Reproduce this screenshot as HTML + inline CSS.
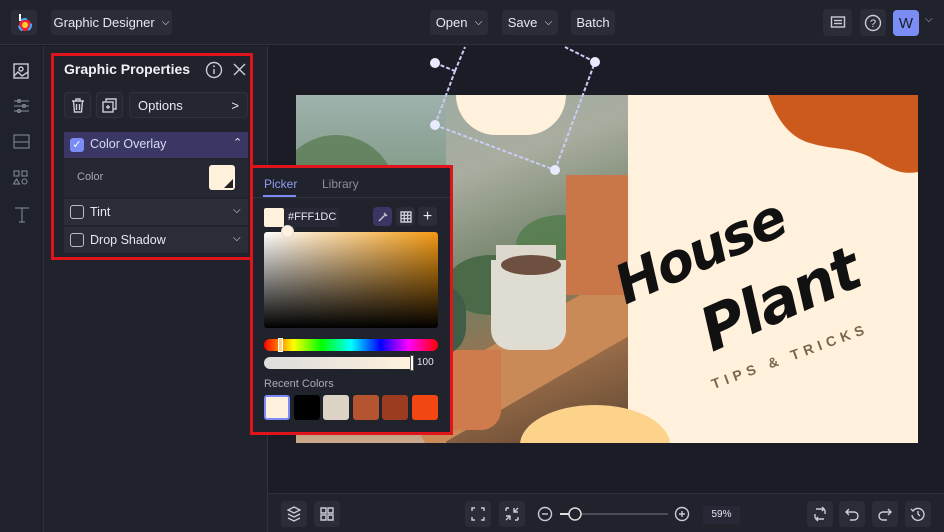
<!DOCTYPE html>
<html><head><meta charset="utf-8"><style>
*{box-sizing:border-box;margin:0;padding:0}
body{width:944px;height:532px;overflow:hidden;background:#1b1c25;font-family:"Liberation Sans",sans-serif;color:#e6e7ee;position:relative}
.abs{position:absolute}
.btn{position:absolute;background:#2a2c38;border-radius:4px;color:#e8e8ee;font-size:13px;display:flex;align-items:center;justify-content:center}
.ic{stroke:#c9cbd6;fill:none;stroke-width:1.4}
.rot{position:absolute;white-space:nowrap;text-align:center}
</style></head><body>
<!-- top bar -->
<div class="abs" style="left:0;top:0;width:944px;height:45px;background:#20222c;border-bottom:1px solid #2e303c"></div>
<div class="btn" style="left:11px;top:10px;width:26px;height:25px;background:#2a2c38">
<svg width="18" height="20" viewBox="0 0 18 20"><line x1="5" y1="1" x2="5" y2="8" stroke="#fff" stroke-width="2"/><circle cx="10" cy="12" r="6" fill="#e23"/><circle cx="10" cy="12" r="6" fill="none" stroke="#4af" stroke-width="2" stroke-dasharray="6 6"/><circle cx="10" cy="12" r="3" fill="#fc3"/></svg></div>
<div class="btn" style="left:51px;top:10px;width:121px;height:25px">Graphic Designer&nbsp;&nbsp;<span style="font-size:10px">⌵</span></div>
<div class="btn" style="left:430px;top:10px;width:58px;height:25px">Open&nbsp;&nbsp;<span style="font-size:10px">⌵</span></div>
<div class="btn" style="left:502px;top:10px;width:56px;height:25px">Save&nbsp;&nbsp;<span style="font-size:10px">⌵</span></div>
<div class="btn" style="left:571px;top:10px;width:44px;height:25px">Batch</div>
<div class="btn" style="left:823px;top:9px;width:29px;height:27px"><svg width="16" height="16"><rect x="1.5" y="2" width="13" height="10" class="ic"/><line x1="4" y1="5.5" x2="12" y2="5.5" class="ic"/><line x1="4" y1="8.5" x2="12" y2="8.5" class="ic"/></svg></div>
<div class="btn" style="left:860px;top:9px;width:26px;height:27px"><svg width="18" height="18"><circle cx="9" cy="9" r="7.5" class="ic"/><text x="9" y="13" fill="#ddd" font-size="11" text-anchor="middle" font-family="Liberation Sans">?</text></svg></div>
<div class="btn" style="left:893px;top:10px;width:26px;height:26px;background:#7b8cf5;color:#1b1c25;font-size:15px">W</div>
<div class="abs" style="left:925px;top:14px;font-size:10px;color:#bbb">⌵</div>
<!-- left sidebar -->
<div class="abs" style="left:0;top:46px;width:44px;height:486px;background:#1f212b;border-right:1px solid #2e303c"></div>
<svg class="abs" style="left:12px;top:62px" width="20" height="170">
<rect x="2" y="2" width="14" height="14" class="ic" stroke="#8a8d9c"/><circle cx="9" cy="7" r="2" class="ic" stroke="#8a8d9c"/><path d="M2 14l4-4 4 4 6-4" class="ic" stroke="#8a8d9c"/>
<g stroke="#8a8d9c" fill="none"><line x1="2" y1="39" x2="17" y2="39"/><line x1="2" y1="44" x2="17" y2="44"/><line x1="2" y1="49" x2="17" y2="49"/><circle cx="7" cy="39" r="1.5"/><circle cx="12" cy="44" r="1.5"/><circle cx="7" cy="49" r="1.5"/>
<rect x="2" y="73" width="15" height="13"/><line x1="2" y1="80" x2="17" y2="80"/>
<rect x="2" y="109" width="5" height="5"/><rect x="10" y="109" width="5" height="5"/><path d="M4.5 117l3 5h-6z"/><circle cx="12.5" cy="119.5" r="2.5"/>
<path d="M3 146h14M10 146v14M7 160h6"/></g></svg>
<!-- panel -->
<div class="abs" style="left:44px;top:46px;width:224px;height:486px;background:#20222c;border-right:1px solid #2e303c"></div>
<div class="abs" style="left:51px;top:53px;width:202px;height:207px;border:3px solid #e0141b"></div>
<div class="abs" style="left:64px;top:61px;font-size:14px;font-weight:bold;color:#f2f2f6">Graphic Properties</div>
<svg class="abs" style="left:205px;top:61px" width="44" height="18"><circle cx="9" cy="9" r="7.5" class="ic" stroke="#ddd"/><line x1="9" y1="8" x2="9" y2="13" class="ic" stroke="#ddd"/><circle cx="9" cy="5.3" r="0.9" fill="#ddd"/><path d="M29 3l11 11M40 3L29 14" class="ic" stroke="#ddd" stroke-width="1.6"/></svg>
<div class="btn" style="left:64px;top:92px;width:27px;height:26px;background:#242632;border:1px solid #2f3140"><svg width="14" height="15"><path d="M1 3h12M5 3V1h4v2M2.5 3l1 11h7l1-11M5.5 6v6M8.5 6v6" class="ic" stroke="#ddd"/></svg></div>
<div class="btn" style="left:96px;top:92px;width:27px;height:26px;background:#242632;border:1px solid #2f3140"><svg width="15" height="15"><rect x="1" y="4" width="10" height="10" class="ic" stroke="#ddd"/><path d="M4 4V1h10v10h-3M6 7v4M4 9h4" class="ic" stroke="#ddd"/></svg></div>
<div class="btn" style="left:129px;top:92px;width:119px;height:26px;background:#242632;border:1px solid #2f3140;justify-content:space-between;padding:0 8px">Options<span>&gt;</span></div>
<div class="abs" style="left:64px;top:132px;width:184px;height:26px;background:#3a3765"></div>
<div class="abs" style="left:70px;top:138px;width:14px;height:14px;background:#7b8cf5;border-radius:3px;color:#fff;font-size:11px;text-align:center;line-height:14px">✓</div>
<div class="abs" style="left:90px;top:137px;font-size:12.5px;color:#d9dbf0">Color Overlay</div>
<div class="abs" style="left:233px;top:136px;font-size:11px">⌃</div>
<div class="abs" style="left:64px;top:159px;width:184px;height:38px;background:#252733"></div>
<div class="abs" style="left:77px;top:171px;font-size:11px;color:#aaa">Color</div>
<div class="abs" style="left:209px;top:165px;width:26px;height:25px;background:#fff1dc;border-radius:3px;overflow:hidden"><div class="abs" style="right:2px;bottom:2px;width:0;height:0;border-left:9px solid transparent;border-bottom:9px solid #222"></div></div>
<div class="abs" style="left:64px;top:199px;width:184px;height:26px;background:#2a2c38"></div>
<div class="abs" style="left:64px;top:227px;width:184px;height:26px;background:#2a2c38"></div>
<div class="abs" style="left:70px;top:205px;width:14px;height:14px;border:1.3px solid #bbb;border-radius:3px"></div>
<div class="abs" style="left:70px;top:233px;width:14px;height:14px;border:1.3px solid #bbb;border-radius:3px"></div>
<div class="abs" style="left:90px;top:205px;font-size:12.5px">Tint</div>
<div class="abs" style="left:90px;top:233px;font-size:12.5px">Drop Shadow</div>
<div class="abs" style="left:233px;top:205px;font-size:10px">⌵</div>
<div class="abs" style="left:233px;top:233px;font-size:10px">⌵</div>
<!-- canvas design -->
<div class="abs" style="left:296px;top:95px;width:332px;height:348px;overflow:hidden;background:linear-gradient(160deg,#97aaa3 0%,#a9ad9f 30%,#6f7f66 55%,#a0714b 75%,#5d4532 100%)">
 <div class="abs" style="left:0;top:0;width:150px;height:348px;background:linear-gradient(180deg,#9fb2ad,#6a8565 45%,#8d7a5a 80%,#c9a98a)"></div>
 <div class="abs" style="left:-20px;top:40px;width:120px;height:120px;background:#54784c;border-radius:50%;opacity:.7"></div>
 <div class="abs" style="left:100px;top:230px;width:280px;height:60px;background:#c98a58;transform:rotate(-30deg)"></div>
 <div class="abs" style="left:220px;top:120px;width:90px;height:60px;background:#557d4d;border-radius:50%;opacity:.85"></div>
 <div class="abs" style="left:150px;top:160px;width:90px;height:60px;background:#4a6a48;border-radius:50%"></div>
 <div class="abs" style="left:200px;top:150px;width:60px;height:60px;background:#dcd8ce;border-radius:0 0 16px 16px"></div>
 <div class="abs" style="left:195px;top:165px;width:75px;height:90px;background:#dfdcd2;border-radius:0 0 20px 20px"></div>
 <div class="abs" style="left:205px;top:160px;width:60px;height:20px;background:#6d5040;border-radius:50%"></div>
 <div class="abs" style="left:130px;top:255px;width:75px;height:80px;background:#d07b4e;border-radius:0 0 20px 20px"></div>
 <div class="abs" style="left:110px;top:190px;width:60px;height:70px;background:#3f5d47;border-radius:40%"></div>
 <div class="abs" style="left:270px;top:80px;width:62px;height:120px;background:#c97648"></div>
 <div class="abs" style="left:160px;top:0;width:110px;height:40px;background:#fff1dc;border-radius:0 0 40px 40px"></div>
</div>
<div class="abs" style="left:628px;top:95px;width:290px;height:348px;background:#fff1dc;overflow:hidden">
 <svg class="abs" style="left:0;top:0" width="290" height="100"><path d="M140 0C148 22 160 42 182 48C205 55 222 52 242 62C262 74 272 80 290 77L290 0Z" fill="#cc5a1c"/></svg>
</div>
<div class="abs" style="left:520px;top:405px;width:150px;height:80px;background:#fdd38c;border-radius:50%;clip-path:inset(0 0 42px 0)"></div>
<div class="rot" style="left:590px;top:220px;width:220px;font-family:'DejaVu Sans',sans-serif;font-style:italic;font-weight:bold;font-size:54px;color:#111;transform:rotate(-24deg);letter-spacing:-2px">House</div>
<div class="rot" style="left:670px;top:265px;width:220px;font-family:'DejaVu Sans',sans-serif;font-style:italic;font-weight:bold;font-size:60px;color:#111;transform:rotate(-24deg);letter-spacing:-2px">Plant</div>
<div class="rot" style="left:705px;top:348px;width:170px;font-size:14px;font-weight:bold;color:#7a6650;letter-spacing:5px;transform:rotate(-20deg)">TIPS &amp; TRICKS</div>
<svg class="abs" style="left:420px;top:45px" width="200" height="140"><path d="M15 18l20 8M35 26L45 2M15 80l20-54M15 80l120 45M135 125l40-108M175 17L145 2" stroke="#c9cdf5" stroke-width="2" stroke-dasharray="4 2" fill="none"/><g fill="#e8eaff"><circle cx="15" cy="18" r="5"/><circle cx="15" cy="80" r="5"/><circle cx="135" cy="125" r="5"/><circle cx="175" cy="17" r="5"/></g></svg>
<!-- color picker -->
<div class="abs" style="left:250px;top:165px;width:203px;height:270px;background:#20222c;border:3px solid #e0141b"></div>
<div class="abs" style="left:264px;top:177px;font-size:12px;color:#8f9cf0">Picker</div>
<div class="abs" style="left:263px;top:195px;width:33px;height:2px;background:#7b8cf5"></div>
<div class="abs" style="left:322px;top:177px;font-size:12px;color:#8a8c9a">Library</div>
<div class="abs" style="left:253px;top:197px;width:197px;height:1px;background:#30323e"></div>
<div class="abs" style="left:264px;top:208px;width:20px;height:19px;background:#fff1dc;border-radius:2px"></div>
<div class="abs" style="left:285px;top:208px;width:54px;height:19px;background:#262835;font-size:11px;line-height:19px;padding-left:3px">#FFF1DC</div>
<div class="btn" style="left:373px;top:207px;width:19px;height:19px;background:#3a3765"><svg width="12" height="12"><path d="M2 10l6-6M7 2l3 3" class="ic" stroke="#9aa6f5"/></svg></div>
<div class="btn" style="left:396px;top:207px;width:19px;height:19px"><svg width="12" height="12"><path d="M1 1h10v10H1zM1 4.3h10M1 7.6h10M4.3 1v10M7.6 1v10" class="ic" stroke="#ddd" stroke-width="1"/></svg></div>
<div class="btn" style="left:418px;top:207px;width:19px;height:19px;font-size:16px">+</div>
<div class="abs" style="left:264px;top:232px;width:174px;height:96px;border-radius:3px;background:linear-gradient(to top,#000,transparent),linear-gradient(to right,#fff,#f39a12)"></div>
<div class="abs" style="left:281px;top:225px;width:13px;height:13px;border-radius:50%;background:#fff1dc;border:1px solid #ddd"></div>
<div class="abs" style="left:264px;top:339px;width:174px;height:12px;border-radius:6px;background:linear-gradient(to right,#f00,#ff0 17%,#0f0 33%,#0ff 50%,#00f 67%,#f0f 83%,#f00)"></div>
<div class="abs" style="left:278px;top:338px;width:5px;height:14px;background:#fdd38c;border:1px solid #fff"></div>
<div class="abs" style="left:264px;top:357px;width:150px;height:12px;border-radius:6px 0 0 6px;background:linear-gradient(to right,#ddd,#fff1dc)"></div>
<div class="abs" style="left:410px;top:355px;width:4px;height:16px;background:#fff;border:1px solid #555"></div>
<div class="abs" style="left:417px;top:357px;font-size:10px">100</div>
<div class="abs" style="left:264px;top:378px;font-size:11px;color:#a8aab6">Recent Colors</div>
<div class="abs" style="left:264px;top:395px;width:26px;height:25px;border-radius:3px;background:#fff1dc;border:2px solid #7b8cf5"></div>
<div class="abs" style="left:294px;top:395px;width:26px;height:25px;border-radius:3px;background:#000"></div>
<div class="abs" style="left:323px;top:395px;width:26px;height:25px;border-radius:3px;background:#dcd3c5"></div>
<div class="abs" style="left:353px;top:395px;width:26px;height:25px;border-radius:3px;background:#b45431"></div>
<div class="abs" style="left:382px;top:395px;width:26px;height:25px;border-radius:3px;background:#9b3c20"></div>
<div class="abs" style="left:412px;top:395px;width:26px;height:25px;border-radius:3px;background:#f24712"></div>
<!-- bottom bar -->
<div class="abs" style="left:268px;top:493px;width:676px;height:39px;background:#20222c;border-top:1px solid #2e303c"></div>
<div class="btn" style="left:281px;top:501px;width:26px;height:26px"><svg width="14" height="16"><path d="M7 1l6 3-6 3-6-3zM1 8l6 3 6-3M1 12l6 3 6-3" class="ic"/></svg></div>
<div class="btn" style="left:314px;top:501px;width:26px;height:26px"><svg width="14" height="14"><path d="M1 1h5v5H1zM8 1h5v5H8zM1 8h5v5H1zM8 8h5v5H8z" class="ic"/></svg></div>
<div class="btn" style="left:465px;top:501px;width:26px;height:26px"><svg width="14" height="14"><path d="M1 4V1h3M10 1h3v3M13 10v3h-3M4 13H1v-3" class="ic"/></svg></div>
<div class="btn" style="left:499px;top:501px;width:26px;height:26px"><svg width="14" height="14"><path d="M1 1h3M1 1v3M13 5L9 5 9 1M13 1L9 5M1 13l4-4M1 9h4v4M13 13h-3M13 13v-3" class="ic"/></svg></div>
<svg class="abs" style="left:536px;top:505px" width="160" height="18"><circle cx="9" cy="9" r="6.5" class="ic" stroke="#ddd"/><line x1="6" y1="9" x2="12" y2="9" class="ic" stroke="#ddd"/><line x1="24" y1="9" x2="132" y2="9" stroke="#4a4c5a" stroke-width="2"/><line x1="24" y1="9" x2="34" y2="9" stroke="#ddd" stroke-width="2"/><circle cx="39" cy="9" r="6" fill="#20222c" stroke="#ddd" stroke-width="1.5"/><circle cx="146" cy="9" r="6.5" class="ic" stroke="#ddd"/><path d="M143 9h6M146 6v6" class="ic" stroke="#ddd"/></svg>
<div class="abs" style="left:703px;top:506px;width:37px;height:18px;background:#262835;font-size:10px;line-height:18px;text-align:center">59%</div>
<div class="btn" style="left:807px;top:501px;width:26px;height:26px"><svg width="14" height="16"><path d="M3 3h7a2 2 0 012 2v3M11 13H4a2 2 0 01-2-2V8M9 1l2 2-2 2M5 11l-2 2 2 2" class="ic"/></svg></div>
<div class="btn" style="left:839px;top:501px;width:26px;height:26px"><svg width="14" height="14"><path d="M4 2L1 5l3 3M1 5h8a4 4 0 010 8H5" class="ic"/></svg></div>
<div class="btn" style="left:872px;top:501px;width:26px;height:26px"><svg width="14" height="14"><path d="M10 2l3 3-3 3M13 5H5a4 4 0 000 8h4" class="ic"/></svg></div>
<div class="btn" style="left:905px;top:501px;width:26px;height:26px"><svg width="16" height="16"><path d="M3 5a6 6 0 11-1 4M1 3l2 2 2-2M8 5v3l2 2" class="ic"/></svg></div>
</body></html>
